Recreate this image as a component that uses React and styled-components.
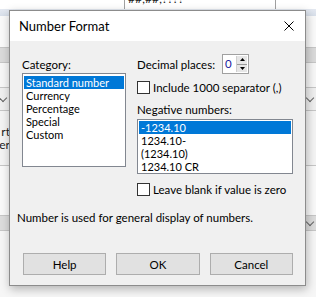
import styled, { createGlobalStyle } from 'styled-components'

const Global = createGlobalStyle`
  html, body { margin: 0; padding: 0; }
  body {
    width: 316px;
    height: 297px;
    overflow: hidden;
    background: #fff;
    font-family: Lato, "Open Sans", sans-serif;
  }
`

export const Stage = styled.div`
  position: relative;
  width: 316px;
  height: 297px;
  overflow: hidden;
`

// spreadsheet showing behind the dialog
export const Sheet = styled.div`
  display: flex;
  flex-direction: column;
  width: 316px;
  height: 297px;
`

export const SheetRow = styled.div`
  display: flex;
  align-items: stretch;
  flex: 0 0 ${({ h }) => h}px;
  background: ${({ bg }) => bg || '#fff'};
  border-bottom: ${({ line }) => line ? '1px solid #c6c6c6' : 'none'};
  box-sizing: border-box;
  font-size: 12px;
  color: #000;
  overflow: hidden;
`

export const SheetCell = styled.div`
  flex: 0 0 ${({ w }) => w}px;
  box-sizing: border-box;
  border-right: ${({ edge }) => edge ? '1px solid #a0a0a0' : 'none'};
  padding-left: ${({ pad }) => pad || 0}px;
  display: flex;
  flex-direction: column;
  align-items: ${({ end }) => end ? 'flex-end' : 'flex-start'};
  justify-content: ${({ top }) => top ? 'flex-start' : 'center'};
  line-height: 13px;
  white-space: nowrap;
  overflow: hidden;
  color: #222;
`

export const CutText = styled.span`
  margin-top: ${({ shift }) => shift}px;
`

export const Chevron = styled.span`
  display: inline-block;
  width: 5px;
  height: 5px;
  border-right: 1px solid #666;
  border-bottom: 1px solid #666;
  transform: rotate(45deg);
  margin: 0 3px 3px 0;
`

export const Dialog = styled.div`
  position: absolute;
  left: 9px;
  top: 10px;
  width: 297px;
  height: 276px;
  box-sizing: border-box;
  border: 1px solid #8c8c8c;
  background: #f0f0f0;
  box-shadow: 1px 3px 9px rgba(0, 0, 0, 0.28);
  display: flex;
  flex-direction: column;
  font-size: 11.5px;
  color: #000;
`

export const TitleBar = styled.div`
  flex: 0 0 30px;
  background: #fff;
  display: flex;
  align-items: center;
  justify-content: space-between;
  padding: 0 11px 0 9px;
  font-size: 13px;
`

export const CloseIcon = styled.svg`
  width: 10px;
  height: 10px;
`

export const Body = styled.div`
  flex: 1;
  display: flex;
  flex-direction: column;
  padding: 13px 12px 0 12px;
`

export const Columns = styled.div`
  display: flex;
  gap: 11px;
`

export const Column = styled.div`
  display: flex;
  flex-direction: column;
  width: ${({ w }) => w}px;
`

export const Label = styled.div`
  line-height: 15px;
  height: 15px;
  margin-top: ${({ mt }) => mt || 0}px;
  margin-bottom: ${({ mb }) => mb || 0}px;
  white-space: nowrap;
`

export const ListBox = styled.div`
  height: ${({ h }) => h}px;
  box-sizing: border-box;
  border: 1px solid #828790;
  background: #fff;
  padding: ${({ pt }) => pt}px 1px 0 1px;
  overflow: hidden;
`

export const ListItem = styled.div`
  height: 13px;
  line-height: 13px;
  padding-left: 2px;
  font-size: 11px;
  white-space: nowrap;
  background: ${({ selected }) => selected ? '#0078d7' : 'transparent'};
  color: ${({ selected }) => selected ? '#fff' : '#000'};
`

export const FieldRow = styled.div`
  display: flex;
  align-items: center;
  height: 20px;
`

export const FieldLabel = styled.span`
  flex: 0 0 85px;
  white-space: nowrap;
`

export const SpinBox = styled.div`
  display: flex;
  width: 27px;
  height: 20px;
  box-sizing: border-box;
  border: 1px solid #a0a0a0;
  background: #fff;
`

export const SpinValue = styled.div`
  flex: 1;
  padding-left: 2px;
  line-height: 17px;
  color: #1a1aa0;
`

export const SpinButtons = styled.div`
  display: flex;
  flex-direction: column;
  width: 10px;
  margin: 1px;
  background: #e6e6e6;
  border-left: 1px solid #cfcfcf;
`

export const SpinArrow = styled.div`
  flex: 1;
  display: flex;
  align-items: center;
  justify-content: center;
  &:first-child { border-bottom: 1px solid #999; }
`

export const CheckRow = styled.label`
  display: flex;
  align-items: center;
  gap: 3px;
  height: 13px;
  margin-top: ${({ mt }) => mt || 0}px;
  white-space: nowrap;
`

export const CheckBox = styled.span`
  flex: 0 0 13px;
  height: 13px;
  box-sizing: border-box;
  border: 1px solid #333;
  background: #fff;
`

export const Description = styled.div`
  margin: 14px 0 0 -5px;
  line-height: 15px;
  white-space: nowrap;
`

export const ButtonRow = styled.div`
  display: flex;
  gap: 10px;
  margin-top: 28px;
  padding-left: 1px;
`

export const Button = styled.button`
  width: 84px;
  height: 22px;
  box-sizing: border-box;
  border: 1px solid #adadad;
  background: #e1e1e1;
  font: inherit;
  font-size: 11.5px;
  color: #000;
  padding: 0;
`

const Arrow = ({ up }) => (
  <svg width="5" height="3" viewBox="0 0 5 3">
    <path d={up ? 'M2.5 0 L5 3 L0 3 Z' : 'M0 0 L5 0 L2.5 3 Z'} fill="#000" />
  </svg>
)

export default function App() {
  return (
    <Stage>
      <Global />
      <Sheet>
        <SheetRow h={9}>
          <SheetCell w={125} edge />
          <SheetCell w={151} edge pad={3} top>
            <CutText shift={-8}>##;##;????</CutText>
          </SheetCell>
          <SheetCell w={40} />
        </SheetRow>
        <SheetRow h={7} bg="linear-gradient(#e4e9f1, #d8dfea)">
          <SheetCell w={125} />
          <SheetCell w={151} pad={3} top>
            <CutText shift={-2}>#.###.###,00</CutText>
          </SheetCell>
        </SheetRow>
        <SheetRow h={32} bg="#fafafa" line />
        <SheetRow h={15} bg="#dadada" line />
        <SheetRow h={25} bg="#f7f7f7" line />
        <SheetRow h={23} bg="#efefef" line>
          <SheetCell w={9} end><Chevron /></SheetCell>
          <SheetCell w={296} />
          <SheetCell w={11} end><Chevron /></SheetCell>
        </SheetRow>
        <SheetRow h={55} bg="#f4f4f4" line>
          <SheetCell w={10} end>
            <span>rt</span>
            <span>er</span>
          </SheetCell>
        </SheetRow>
        <SheetRow h={50} bg="#f9f9f9" line />
        <SheetRow h={15} bg="#dcdcdc" line>
          <SheetCell w={305} />
          <SheetCell w={11} end><Chevron /></SheetCell>
        </SheetRow>
        <SheetRow h={66} bg="#f6f6f6" />
      </Sheet>

      <Dialog>
        <TitleBar>
          <span>Number Format</span>
          <CloseIcon viewBox="0 0 10 10">
            <path d="M0.5 0.5 L9.5 9.5 M9.5 0.5 L0.5 9.5" stroke="#000" strokeWidth="1" />
          </CloseIcon>
        </TitleBar>
        <Body>
          <Columns>
            <Column w={104}>
              <Label mt={3} mb={1}>Category:</Label>
              <ListBox h={94} pt={2}>
                <ListItem selected>Standard number</ListItem>
                <ListItem>Currency</ListItem>
                <ListItem>Percentage</ListItem>
                <ListItem>Special</ListItem>
                <ListItem>Custom</ListItem>
              </ListBox>
            </Column>
            <Column w={156}>
              <FieldRow>
                <FieldLabel>Decimal places:</FieldLabel>
                <SpinBox>
                  <SpinValue>0</SpinValue>
                  <SpinButtons>
                    <SpinArrow><Arrow up /></SpinArrow>
                    <SpinArrow><Arrow /></SpinArrow>
                  </SpinButtons>
                </SpinBox>
              </FieldRow>
              <CheckRow mt={7}>
                <CheckBox />
                Include 1000 separator (,)
              </CheckRow>
              <Label mt={8} mb={2}>Negative numbers:</Label>
              <ListBox h={55} pt={1}>
                <ListItem selected>-1234.10</ListItem>
                <ListItem>1234.10-</ListItem>
                <ListItem>(1234.10)</ListItem>
                <ListItem>1234.10 CR</ListItem>
              </ListBox>
              <CheckRow mt={9}>
                <CheckBox />
                Leave blank if value is zero
              </CheckRow>
            </Column>
          </Columns>
          <Description>Number is used for general display of numbers.</Description>
          <ButtonRow>
            <Button>Help</Button>
            <Button>OK</Button>
            <Button>Cancel</Button>
          </ButtonRow>
        </Body>
      </Dialog>
    </Stage>
  )
}
